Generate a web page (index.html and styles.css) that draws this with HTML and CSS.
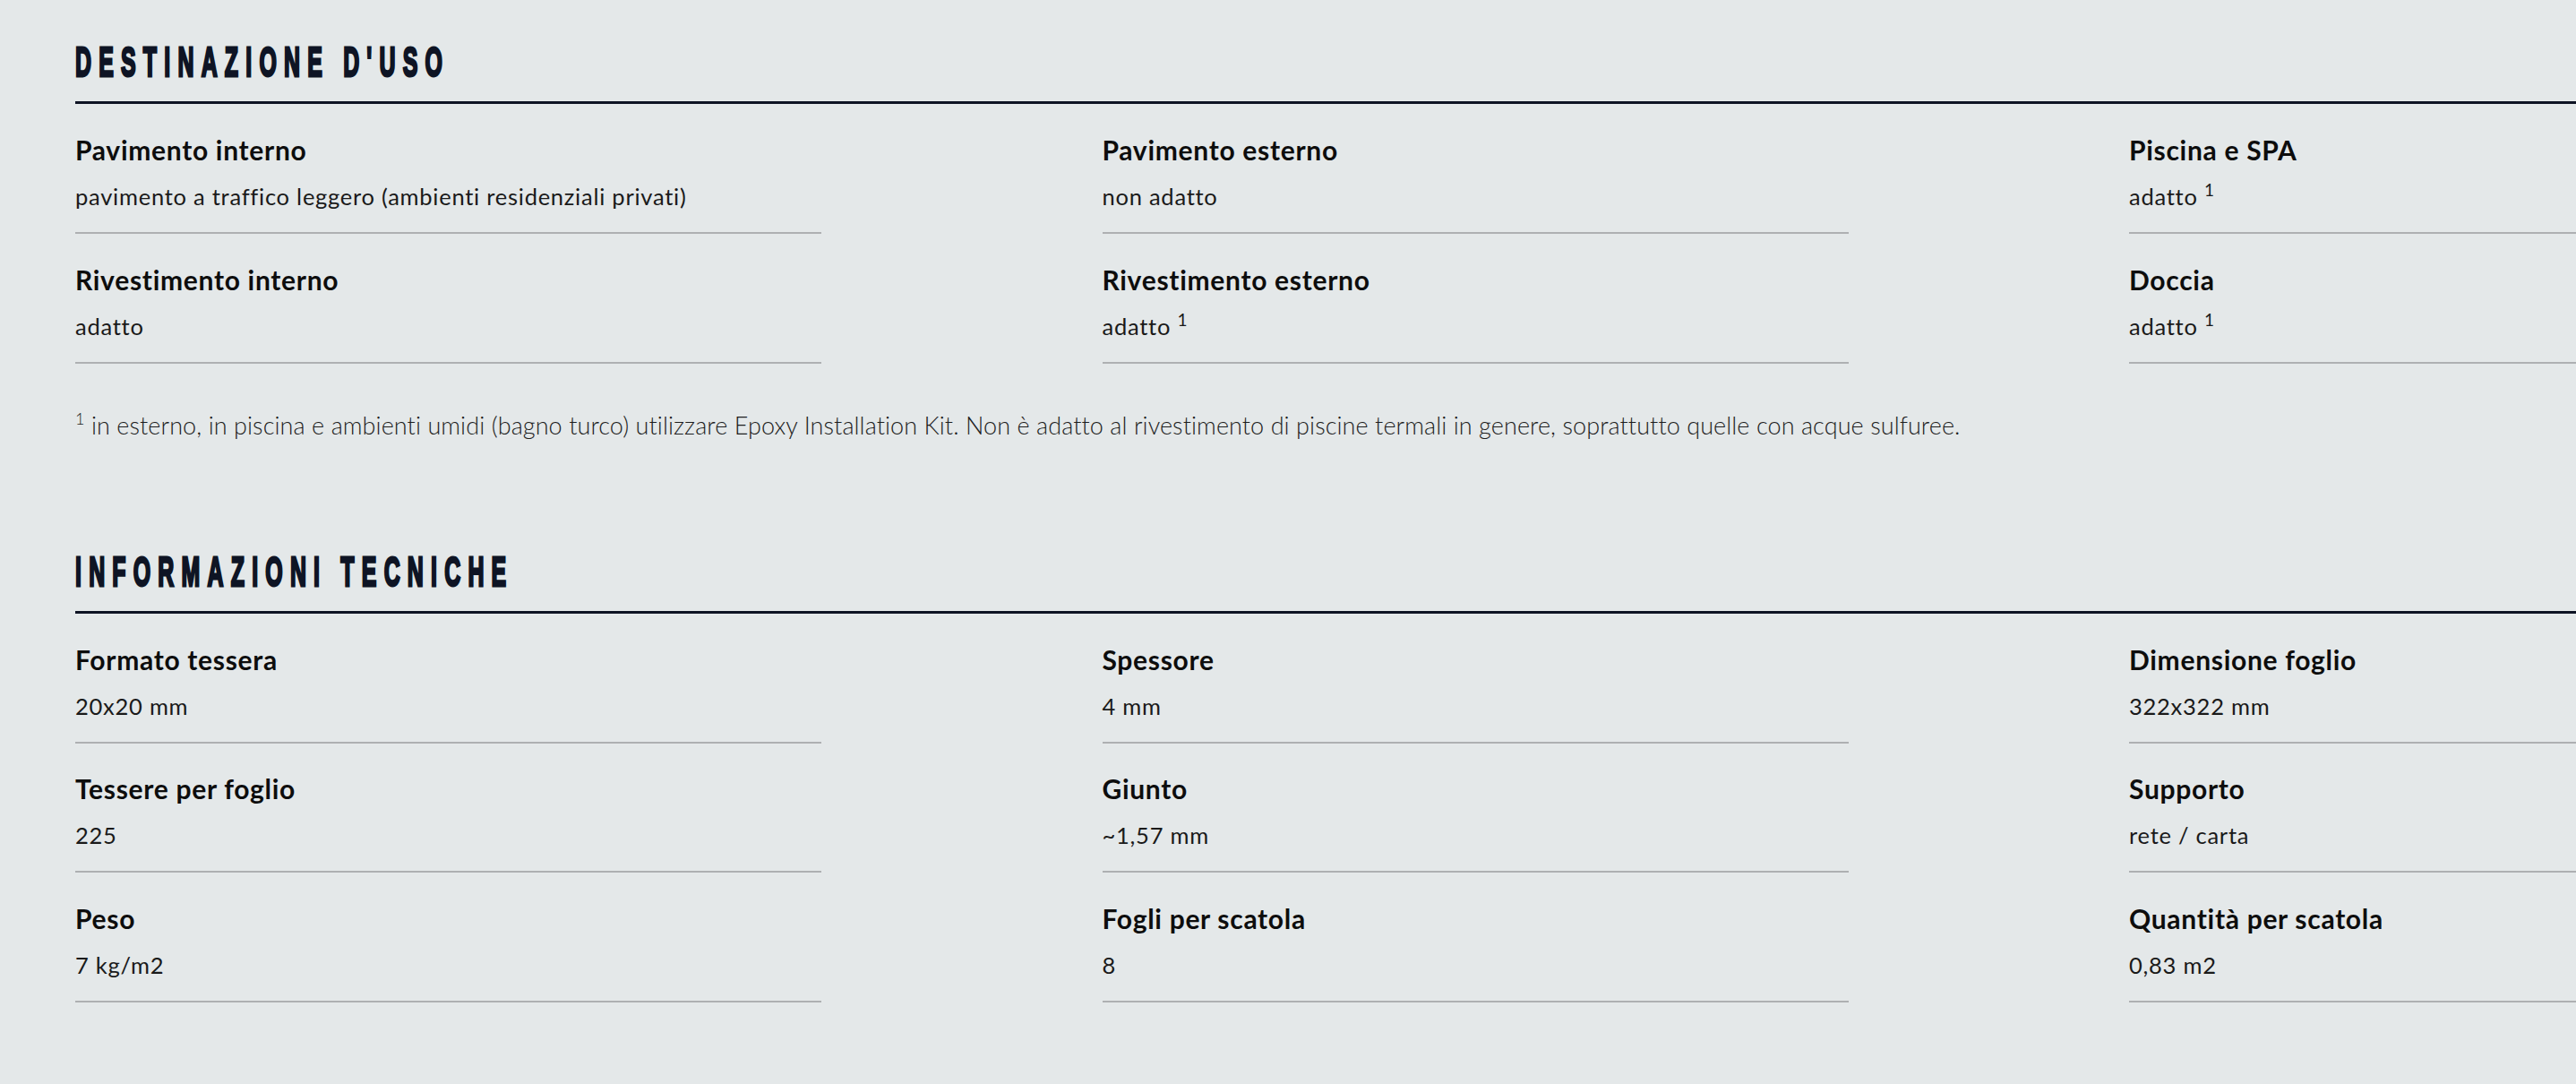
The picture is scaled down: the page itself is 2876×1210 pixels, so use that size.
FILE: index.html
```html
<!DOCTYPE html>
<html lang="it">
<head>
<meta charset="utf-8">
<title>Scheda tecnica</title>
<link rel="stylesheet" href="styles.css">
</head>
<body>
<main class="page">
  <section class="sec sec-uso">
    <div class="sec-head"><h2 class="sec-title">DESTINAZIONE D'USO</h2></div>
    <div class="grid">
      <div class="item"><div class="label">Pavimento interno</div><div class="value">pavimento a traffico leggero (ambienti residenziali privati)</div></div>
      <div class="item"><div class="label">Pavimento esterno</div><div class="value">non adatto</div></div>
      <div class="item"><div class="label">Piscina e SPA</div><div class="value">adatto <sup class="note">1</sup></div></div>
      <div class="item"><div class="label">Rivestimento interno</div><div class="value">adatto</div></div>
      <div class="item"><div class="label">Rivestimento esterno</div><div class="value">adatto <sup class="note">1</sup></div></div>
      <div class="item"><div class="label">Doccia</div><div class="value">adatto <sup class="note">1</sup></div></div>
    </div>
    <p class="footnote"><sup class="fn-mark">1</sup> in esterno, in piscina e ambienti umidi (bagno turco) utilizzare Epoxy Installation Kit. Non è adatto al rivestimento di piscine termali in genere, soprattutto quelle con acque sulfuree.</p>
  </section>
  <section class="sec sec-tech">
    <div class="sec-head"><h2 class="sec-title">INFORMAZIONI TECNICHE</h2></div>
    <div class="grid">
      <div class="item"><div class="label">Formato tessera</div><div class="value">20x20 mm</div></div>
      <div class="item"><div class="label">Spessore</div><div class="value">4 mm</div></div>
      <div class="item"><div class="label">Dimensione foglio</div><div class="value">322x322 mm</div></div>
      <div class="item"><div class="label">Tessere per foglio</div><div class="value">225</div></div>
      <div class="item"><div class="label">Giunto</div><div class="value">~1,57 mm</div></div>
      <div class="item"><div class="label">Supporto</div><div class="value">rete / carta</div></div>
      <div class="item"><div class="label">Peso</div><div class="value">7 kg/m2</div></div>
      <div class="item"><div class="label">Fogli per scatola</div><div class="value">8</div></div>
      <div class="item"><div class="label">Quantità per scatola</div><div class="value">0,83 m2</div></div>
    </div>
  </section>
</main>
</body>
</html>
```
FILE: styles.css
```css
html, body {
  margin: 0;
  padding: 0;
  background: #e4e8e9;
  overflow: hidden;
}
body {
  width: 2876px;
  height: 1210px;
  font-family: Lato, "Noto Sans", sans-serif;
  font-variant-ligatures: no-common-ligatures;
  color: #111;
}
.page {
  width: 3125px;
  padding: 46px 0 0 84px;
}
.sec-head {
  border-bottom: 3px solid #0e1424;
  padding-bottom: 22px;
}
.sec-title {
  margin: 0;
  display: inline-block;
  font-family: "Liberation Sans Narrow", "Liberation Sans", sans-serif;
  font-weight: 700;
  font-size: 47px;
  line-height: 45px;
  letter-spacing: 15.5px;
  color: #0e1424;
  -webkit-text-stroke: 3px #0e1424;
  transform: scaleX(0.53);
  transform-origin: left center;
  white-space: nowrap;
}
.grid {
  display: grid;
  grid-template-columns: repeat(3, 833px);
  column-gap: 313.5px;
  row-gap: 30.5px;
  margin-top: 31px;
}
.item {
  border-bottom: 2px solid #aeb0b2;
  padding-bottom: 23px;
}
.label {
  font-weight: 700;
  font-size: 30px;
  line-height: 40px;
  letter-spacing: 0.7px;
  color: #0d0d0d;
}
.value {
  margin-top: 15px;
  font-size: 25.5px;
  line-height: 34px;
  letter-spacing: 0.75px;
  color: #1a1a1a;
}
.note {
  font-size: 19px;
  line-height: 0;
  vertical-align: 10px;
  letter-spacing: 0;
}
.footnote {
  margin: 52px 0 0;
  font-size: 27px;
  line-height: 34px;
  font-weight: 300;
  letter-spacing: 0.08px;
  color: #1e1e1e;
}
.fn-mark {
  font-size: 18px;
  line-height: 0;
  vertical-align: 11px;
}
.sec-tech {
  margin-top: 123px;
}
```
